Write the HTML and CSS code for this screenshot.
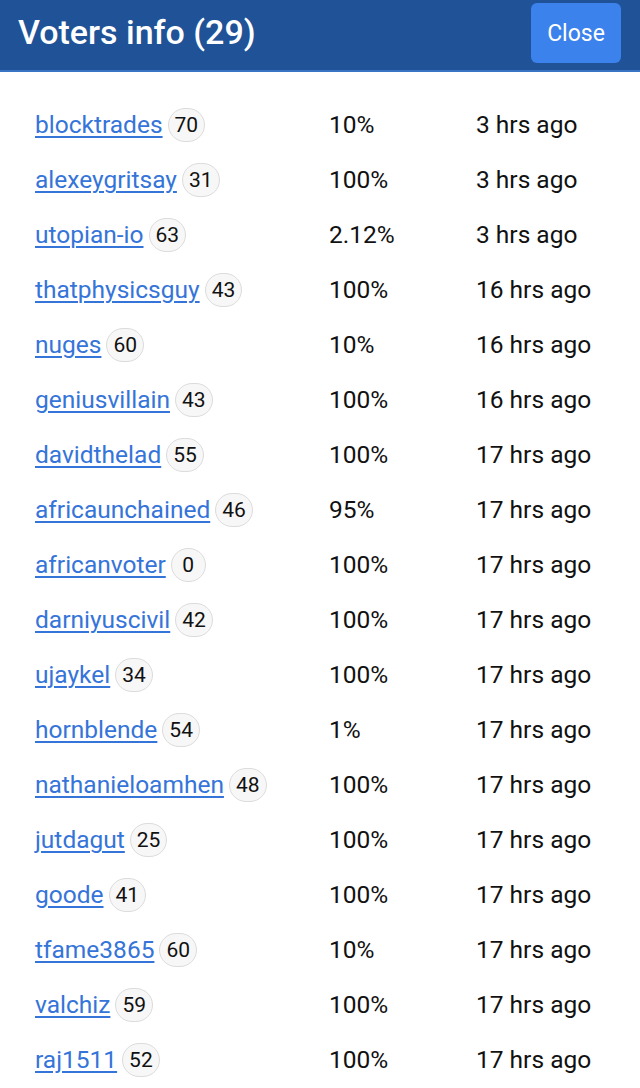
FILE: index.html
```html
<!DOCTYPE html>
<html>
<head>
<meta charset="utf-8">
<link rel="stylesheet" href="styles.css">
</head>
<body>
<div class="header">
  <h1 class="title">Voters info (29)</h1>
  <button class="close">Close</button>
</div>
<div class="list">
  <div class="row"><div class="who"><a href="#">blocktrades</a><span class="rep">70</span></div><div class="pct">10%</div><div class="time">3 hrs ago</div></div>
  <div class="row"><div class="who"><a href="#">alexeygritsay</a><span class="rep">31</span></div><div class="pct">100%</div><div class="time">3 hrs ago</div></div>
  <div class="row"><div class="who"><a href="#">utopian-io</a><span class="rep">63</span></div><div class="pct">2.12%</div><div class="time">3 hrs ago</div></div>
  <div class="row"><div class="who"><a href="#">thatphysicsguy</a><span class="rep">43</span></div><div class="pct">100%</div><div class="time">16 hrs ago</div></div>
  <div class="row"><div class="who"><a href="#">nuges</a><span class="rep">60</span></div><div class="pct">10%</div><div class="time">16 hrs ago</div></div>
  <div class="row"><div class="who"><a href="#">geniusvillain</a><span class="rep">43</span></div><div class="pct">100%</div><div class="time">16 hrs ago</div></div>
  <div class="row"><div class="who"><a href="#">davidthelad</a><span class="rep">55</span></div><div class="pct">100%</div><div class="time">17 hrs ago</div></div>
  <div class="row"><div class="who"><a href="#">africaunchained</a><span class="rep">46</span></div><div class="pct">95%</div><div class="time">17 hrs ago</div></div>
  <div class="row"><div class="who"><a href="#">africanvoter</a><span class="rep">0</span></div><div class="pct">100%</div><div class="time">17 hrs ago</div></div>
  <div class="row"><div class="who"><a href="#">darniyuscivil</a><span class="rep">42</span></div><div class="pct">100%</div><div class="time">17 hrs ago</div></div>
  <div class="row"><div class="who"><a href="#">ujaykel</a><span class="rep">34</span></div><div class="pct">100%</div><div class="time">17 hrs ago</div></div>
  <div class="row"><div class="who"><a href="#">hornblende</a><span class="rep">54</span></div><div class="pct">1%</div><div class="time">17 hrs ago</div></div>
  <div class="row"><div class="who"><a href="#">nathanieloamhen</a><span class="rep">48</span></div><div class="pct">100%</div><div class="time">17 hrs ago</div></div>
  <div class="row"><div class="who"><a href="#">jutdagut</a><span class="rep">25</span></div><div class="pct">100%</div><div class="time">17 hrs ago</div></div>
  <div class="row"><div class="who"><a href="#">goode</a><span class="rep">41</span></div><div class="pct">100%</div><div class="time">17 hrs ago</div></div>
  <div class="row"><div class="who"><a href="#">tfame3865</a><span class="rep">60</span></div><div class="pct">10%</div><div class="time">17 hrs ago</div></div>
  <div class="row"><div class="who"><a href="#">valchiz</a><span class="rep">59</span></div><div class="pct">100%</div><div class="time">17 hrs ago</div></div>
  <div class="row"><div class="who"><a href="#">raj1511</a><span class="rep">52</span></div><div class="pct">100%</div><div class="time">17 hrs ago</div></div>
</div>
</body>
</html>
```
FILE: styles.css
```css
html, body {
  margin: 0;
  padding: 0;
  background: #ffffff;
  font-family: Roboto, "Liberation Sans", sans-serif;
}
.header {
  height: 72px;
  background: #1f5297;
  border-bottom: 2px solid #3a74c4;
  display: flex;
  align-items: flex-start;
  justify-content: space-between;
  padding: 0 19px 0 18px;
  box-sizing: border-box;
}
.title {
  margin: 0;
  color: #ffffff;
  font-size: 34px;
  font-weight: 500;
  line-height: 64px;
}
.close {
  margin-top: 3px;
  width: 90px;
  height: 60px;
  background: #3b82ec;
  color: #ffffff;
  border: none;
  border-radius: 6px;
  font-family: Roboto, "Liberation Sans", sans-serif;
  font-size: 23px;
  padding: 0;
}
.list {
  padding: 25px 0 0 35px;
}
.row {
  display: grid;
  grid-template-columns: 294px 147px auto;
  height: 55px;
  align-items: center;
  font-size: 24.5px;
  color: #111111;
}
.who {
  display: flex;
  align-items: center;
}
.who a {
  color: #3574d9;
  text-decoration: underline;
  text-decoration-thickness: 1.5px;
  text-underline-offset: 3px;
}
.rep {
  margin-left: 5px;
  min-width: 21px;
  height: 32px;
  padding: 0 6px;
  border: 1.5px solid #dcdcdc;
  background: #f7f7f7;
  border-radius: 17px;
  font-size: 21px;
  display: flex;
  align-items: center;
  justify-content: center;
  color: #111;
}
```
